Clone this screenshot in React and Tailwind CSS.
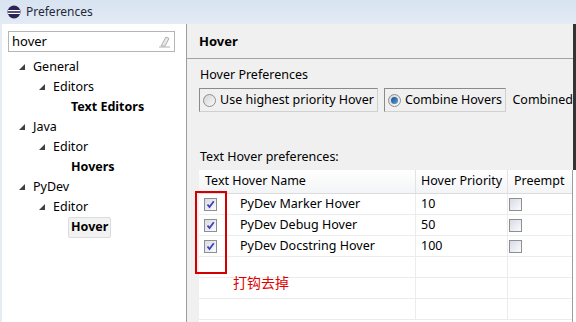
import React from "react";

const font = { fontFamily: '"Noto Sans", "Open Sans", "Noto Sans CJK SC", sans-serif' };

function Tri() {
  return (
    <svg width="6" height="6" viewBox="0 0 6 6" className="shrink-0">
      <polygon points="6,0 6,6 0,6" fill="#404040" />
    </svg>
  );
}

function TreeRow({ level, label, bold, expanded, selected }) {
  const pad = level === 0 ? "pl-[17px]" : level === 1 ? "pl-[37px]" : "pl-[66px]";
  return (
    <div className={`h-[20px] flex items-center ${pad}`}>
      {expanded && (
        <span className="w-[14px] flex items-center">
          <Tri />
        </span>
      )}
      {selected ? (
        <span className="h-[21px] px-[2px] flex items-center bg-[#f2f2f2] border border-[#dcdcdc] rounded-[2px] font-bold text-[12.5px]">
          {label}
        </span>
      ) : (
        <span className={`${bold ? "font-bold pl-[3px]" : ""} text-[12.5px]`}>{label}</span>
      )}
    </div>
  );
}

function Check({ checked }) {
  return (
    <span className="w-[13px] h-[13px] border border-[#8e8f8f] bg-gradient-to-br from-[#d8dbe6] to-[#fbfbfd] flex items-center justify-center shrink-0">
      {checked && (
        <svg width="9" height="9" viewBox="0 0 9 9">
          <path d="M1.5 4.5 L3.5 7 L7.8 1.2" stroke="#4040b8" strokeWidth="1.8" fill="none" />
        </svg>
      )}
    </span>
  );
}

function Radio({ on }) {
  return (
    <span className="w-[13px] h-[13px] rounded-full border border-[#8e8f8f] bg-gradient-to-br from-[#d4d4d4] to-[#fafafa] flex items-center justify-center shrink-0">
      {on && <span className="w-[7px] h-[7px] rounded-full bg-gradient-to-br from-[#0a4d8a] to-[#5fa3db]" />}
    </span>
  );
}

const rows = [
  { name: "PyDev Marker Hover", pr: "10" },
  { name: "PyDev Debug Hover", pr: "50" },
  { name: "PyDev Docstring Hover", pr: "100" },
  null,
  null,
  null,
];

export default function App() {
  return (
    <div className="relative w-[576px] h-[322px] overflow-hidden flex flex-col bg-[#f0f0f0] text-black" style={font}>
      <div className="h-[24px] shrink-0 flex items-center pl-[7px] gap-[5px] bg-gradient-to-b from-[#d8e3f1] to-[#e3ebf5]">
        <svg width="14" height="14" viewBox="0 0 14 14">
          <circle cx="7" cy="7" r="6.5" fill="#2c2255" />
          <rect x="1" y="5" width="12" height="1.2" fill="#fff" />
          <rect x="1" y="7.8" width="12" height="1.2" fill="#fff" />
        </svg>
        <span className="text-[12px] text-[#1e2a3a]">Preferences</span>
      </div>
      <div className="flex flex-1 min-h-0">
        <div className="w-[187px] shrink-0 bg-white border-l-[2px] border-l-[#e6ecf5] border-r border-r-[#9d9d9d] flex flex-col">
          <div className="mt-[7px] ml-[6px] w-[167px] h-[21px] border border-[#b5b5b5] flex items-center pl-[3px] pr-[3px] justify-between">
            <span className="text-[13px]">hover</span>
            <svg width="14" height="13" viewBox="0 0 14 13">
              <path d="M4 11 L9 2 L12 3.5 L8 11 Z" fill="#e8e8e8" stroke="#b0b0b0" strokeWidth="1" />
              <path d="M2 12 H13" stroke="#b0b0b0" strokeWidth="1" />
            </svg>
          </div>
          <div className="mt-[5px] flex flex-col">
            <TreeRow level={0} label="General" expanded />
            <TreeRow level={1} label="Editors" expanded />
            <TreeRow level={2} label="Text Editors" bold />
            <TreeRow level={0} label="Java" expanded />
            <TreeRow level={1} label="Editor" expanded />
            <TreeRow level={2} label="Hovers" bold />
            <TreeRow level={0} label="PyDev" expanded />
            <TreeRow level={1} label="Editor" expanded />
            <TreeRow level={2} label="Hover" selected />
          </div>
        </div>
        <div className="flex-1 flex flex-col min-w-0">
          <div className="h-[146px] shrink-0 flex">
            <div className="flex-1 flex flex-col min-w-0">
              <div className="h-[35px] shrink-0 flex items-center pl-[12px] pt-[2px] border-b border-[#a3a3a3]">
                <span className="font-bold text-[13px]">Hover</span>
              </div>
              <div className="pl-[13px] mt-[7px] h-[18px] flex items-center text-[12.5px]">Hover Preferences</div>
              <div className="pl-[12px] mt-[4px] flex items-center gap-[6px] whitespace-nowrap">
                <div className="w-[181px] h-[24px] border border-[#8a8a8a] border-r-[#d0d0d0] border-b-[#d0d0d0] flex items-center gap-[4px] pl-[3px] text-[12.5px]">
                  <Radio />
                  <span>Use highest priority Hover</span>
                </div>
                <div className="w-[124px] h-[24px] border border-[#8a8a8a] border-r-[#d0d0d0] border-b-[#d0d0d0] flex items-center gap-[4px] pl-[3px] text-[12.5px]">
                  <Radio on />
                  <span>Combine Hovers</span>
                </div>
                <span className="text-[12.5px]">Combined</span>
              </div>
              <div className="pl-[13px] mt-[36px] h-[18px] flex items-center text-[12.5px]">Text Hover preferences:</div>
            </div>
            <div className="w-[3px] shrink-0 bg-[#333333]" />
          </div>
          <div className="flex flex-1 pl-[12px]">
            <div className="w-[374px] shrink-0 bg-white border-r border-[#9d9d9d] flex flex-col text-[12.5px]">
              <div className="h-[24px] shrink-0 flex bg-gradient-to-b from-[#ffffff] to-[#f3f4f6] border-b border-[#dcdcdc]">
                <div className="w-[217px] flex items-center pl-[6px] border-r border-[#e3e3e3]">Text Hover Name</div>
                <div className="w-[92px] flex items-center pl-[5px] border-r border-[#e3e3e3]">Hover Priority</div>
                <div className="flex-1 flex items-center pl-[6px]">Preempt</div>
              </div>
              {rows.map((r, i) => (
                <div key={i} className="h-[21px] shrink-0 flex border-b border-[#ececec]">
                  <div className="w-[217px] flex items-center pl-[5px] border-r border-[#ececec]">
                    {r && (
                      <>
                        <Check checked />
                        <span className="ml-[23px]">{r.name}</span>
                      </>
                    )}
                  </div>
                  <div className="w-[92px] flex items-center pl-[5px] border-r border-[#ececec]">{r && r.pr}</div>
                  <div className="flex-1 flex items-center pl-[1px]">{r && <Check />}</div>
                </div>
              ))}
            </div>
            <div className="flex-1 bg-white" />
          </div>
        </div>
      </div>
      <div className="absolute left-[195px] top-[191px] w-[32px] h-[83px] border-2 border-[#d40000]" />
      <div className="absolute left-[233px] top-[273px] text-[14px] text-[#e00000] leading-[18px]" style={{ fontFamily: '"Noto Sans CJK SC", sans-serif' }}>
        打钩去掉
      </div>
    </div>
  );
}
